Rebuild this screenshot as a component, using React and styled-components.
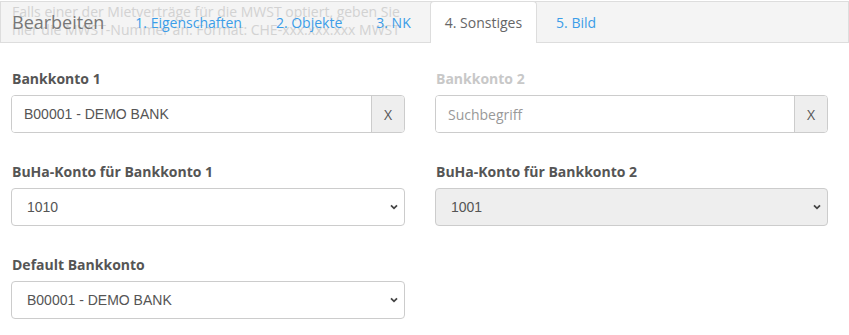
import styled, { createGlobalStyle } from 'styled-components';

const GlobalStyle = createGlobalStyle`
    body {
        margin: 0;
        background: #fff;
        font-family: "Open Sans", "Liberation Sans", sans-serif;
        color: #555;
    }
`;

const Page = styled.div`
    width: 849px;
    height: 335px;
    overflow: hidden;
    padding-top: 1px;
    box-sizing: border-box;
`;

const Header = styled.div`
    position: relative;
    display: flex;
    align-items: stretch;
    height: 40px;
    width: 847px;
    background: #f4f4f4;
    border: 1px solid #ddd;
    box-sizing: content-box;
`;

const Ghost = styled.div`
    position: absolute;
    left: 11px;
    top: 1px;
    width: 396px;
    font-size: 14px;
    line-height: 18px;
    color: #d2d2d2;
    pointer-events: none;
`;

const Title = styled.div`
    position: relative;
    font-size: 18px;
    color: #777;
    padding: 0 16px 0 11px;
    display: flex;
    align-items: center;
`;

const Tab = styled.div`
    position: relative;
    display: flex;
    align-items: center;
    padding: 0 14px;
    margin-right: 4px;
    font-size: 14px;
    color: ${(p) => (p.active ? '#666' : '#3b9de8')};
    background: ${(p) => (p.active ? '#fff' : 'transparent')};
    border: 1px solid transparent;
    border-bottom: none;
    border-color: ${(p) => (p.active ? '#ddd' : 'transparent')};
    border-radius: 4px 4px 0 0;
    margin-top: -1px;
    margin-bottom: ${(p) => (p.active ? '-1px' : '0')};
`;

const Form = styled.div`
    display: grid;
    grid-template-columns: 394px 393px;
    column-gap: 30px;
    row-gap: 29px;
    padding: 26px 0 0 11px;
`;

const Field = styled.div`
    display: flex;
    flex-direction: column;
`;

const Label = styled.label`
    font-size: 14px;
    font-weight: 700;
    line-height: 20px;
    color: ${(p) => (p.muted ? '#c8c8c8' : '#555')};
    margin-bottom: 6px;
    padding-left: 1px;
`;

const InputGroup = styled.div`
    display: flex;
    height: 38px;
    border: 1px solid #ccc;
    border-radius: 4px;
    box-sizing: border-box;
    overflow: hidden;
`;

const Input = styled.div`
    flex: 1;
    display: flex;
    align-items: center;
    padding-left: 12px;
    font-family: ${(p) => (p.placeholder ? '"Open Sans"' : '"Liberation Sans"')}, sans-serif;
    font-size: 14px;
    color: ${(p) => (p.placeholder ? '#999' : '#555')};
    background: #fff;
`;

const Addon = styled.div`
    width: 32px;
    display: flex;
    align-items: center;
    justify-content: center;
    background: #eee;
    border-left: 1px solid #ccc;
    font-family: "Open Sans", sans-serif;
    font-size: 14px;
    color: #555;
`;

const Select = styled.div`
    display: flex;
    align-items: center;
    justify-content: space-between;
    height: 38px;
    box-sizing: border-box;
    border: 1px solid #ccc;
    border-radius: 4px;
    padding: 0 6px 0 15px;
    background: ${(p) => (p.disabled ? '#eee' : '#fff')};
    font-family: "Liberation Sans", sans-serif;
    font-size: 14px;
    color: #555;
`;

function Chevron() {
    return (
        <svg width="8" height="6" viewBox="0 0 8 6">
            <path d="M1 1.3 L4 4.3 L7 1.3" fill="none" stroke="#444" strokeWidth="1.8" />
        </svg>
    );
}

export default function App() {
    return (
        <>
            <GlobalStyle />
            <Page>
                <Header>
                    <Ghost>
                        Falls einer der Mietverträge für die MWST optiert, geben Sie hier die MWST-Nummer an. Format:
                        CHE-xxx.xxx.xxx MWST
                    </Ghost>
                    <Title>Bearbeiten</Title>
                    <Tab>1. Eigenschaften</Tab>
                    <Tab>2. Objekte</Tab>
                    <Tab>3. NK</Tab>
                    <Tab active>4. Sonstiges</Tab>
                    <Tab>5. Bild</Tab>
                </Header>
                <Form>
                    <Field>
                        <Label>Bankkonto 1</Label>
                        <InputGroup>
                            <Input>B00001 - DEMO BANK</Input>
                            <Addon>X</Addon>
                        </InputGroup>
                    </Field>
                    <Field>
                        <Label muted>Bankkonto 2</Label>
                        <InputGroup>
                            <Input placeholder>Suchbegriff</Input>
                            <Addon>X</Addon>
                        </InputGroup>
                    </Field>
                    <Field>
                        <Label>BuHa-Konto für Bankkonto 1</Label>
                        <Select>
                            1010
                            <Chevron />
                        </Select>
                    </Field>
                    <Field>
                        <Label>BuHa-Konto für Bankkonto 2</Label>
                        <Select disabled>
                            1001
                            <Chevron />
                        </Select>
                    </Field>
                    <Field>
                        <Label>Default Bankkonto</Label>
                        <Select>
                            B00001 - DEMO BANK
                            <Chevron />
                        </Select>
                    </Field>
                </Form>
            </Page>
        </>
    );
}
